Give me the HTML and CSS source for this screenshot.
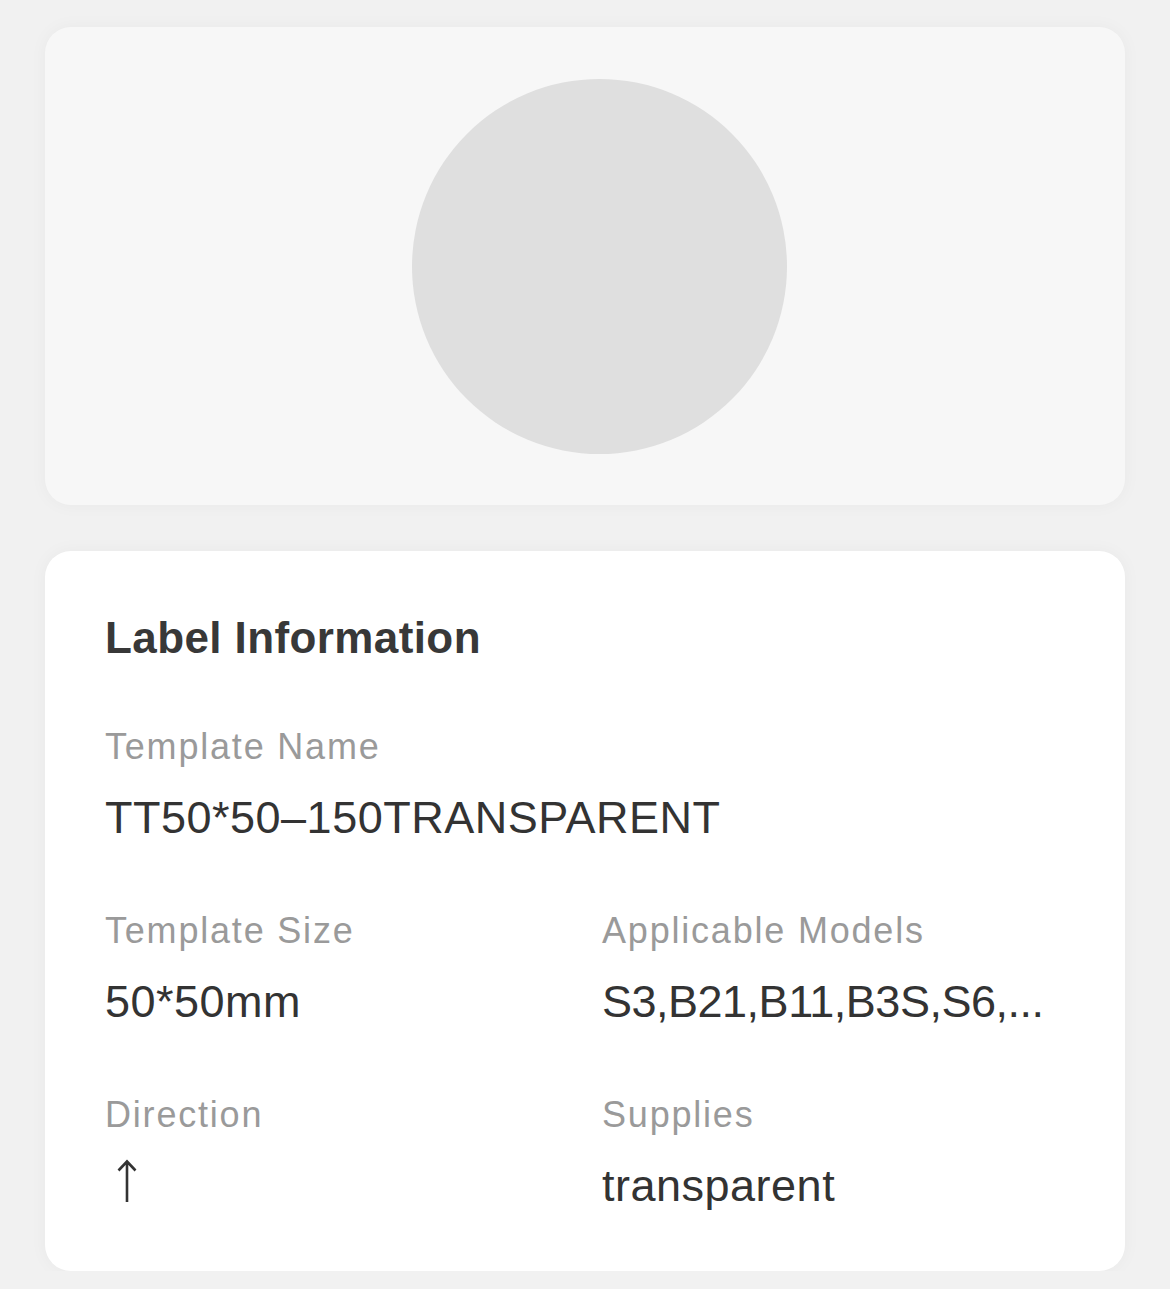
FILE: index.html
```html
<!DOCTYPE html>
<html lang="en">
<head>
<meta charset="UTF-8">
<meta name="viewport" content="width=device-width, initial-scale=1.0">
<title>Label Information</title>
<link rel="stylesheet" href="styles.css">
</head>
<body>
<div class="page">
    <div class="card preview">
        <div class="label-shape"></div>
    </div>

    <div class="card info">
        <h2 class="info-title">Label Information</h2>
        <div class="info-grid">
            <div class="info-item wide">
                <div class="info-label">Template Name</div>
                <div class="info-value">TT50*50–150TRANSPARENT</div>
            </div>
            <div class="info-item">
                <div class="info-label">Template Size</div>
                <div class="info-value">50*50mm</div>
            </div>
            <div class="info-item">
                <div class="info-label">Applicable Models</div>
                <div class="info-value models">S3,B21,B11,B3S,S6,...</div>
            </div>
            <div class="info-item">
                <div class="info-label">Direction</div>
                <div class="info-value">
                    <svg class="arrow" width="22" height="44" viewBox="0 0 22 44">
                        <path d="M11 2 L11 43 M2.5 11.5 L11 2.5 L19.5 11.5" fill="none" stroke="#333" stroke-width="2.6"/>
                    </svg>
                </div>
            </div>
            <div class="info-item">
                <div class="info-label">Supplies</div>
                <div class="info-value">transparent</div>
            </div>
        </div>
    </div>
</div>
</body>
</html>
```

FILE: styles.css
```css
/* Label detail page */
body {
    margin: 0;
    padding: 0;
    background-color: #f1f1f1;
    font-family: "Liberation Sans", Arial, sans-serif;
    color: #333;
}

.page {
    padding: 27px 45px 0;
    display: flex;
    flex-direction: column;
    gap: 46px;
}

.card {
    border-radius: 26px;
    box-shadow: 0 0 18px rgba(0, 0, 0, 0.04);
}

.preview {
    height: 478px;
    padding-left: 28px;
    background-color: #f7f7f7;
    display: flex;
    align-items: center;
    justify-content: center;
}

.label-shape {
    width: 375px;
    height: 375px;
    border-radius: 50%;
    background-color: #dfdfdf;
}

.info {
    background-color: #fff;
    padding: 57px 60px 55px;
}

.info-title {
    margin: 0 0 57px;
    font-size: 44px;
    line-height: 60px;
    font-weight: bold;
    letter-spacing: 0.4px;
    color: #383838;
}

.info-grid {
    display: grid;
    grid-template-columns: 1fr 1fr;
    column-gap: 34px;
    row-gap: 61px;
}

.info-item {
    min-width: 0;
}

.info-item.wide {
    grid-column: 1 / -1;
}

.info-label {
    font-size: 36px;
    line-height: 44px;
    letter-spacing: 1.8px;
    color: #9a9a9a;
    margin-bottom: 19px;
}

.info-value {
    font-size: 45px;
    line-height: 60px;
    height: 60px;
    letter-spacing: 0.5px;
    color: #333;
    white-space: nowrap;
    overflow: hidden;
    text-overflow: ellipsis;
}

.info-value.models {
    letter-spacing: -0.5px;
}

.arrow {
    display: block;
    margin: 3px 0 0 11px;
}
```
